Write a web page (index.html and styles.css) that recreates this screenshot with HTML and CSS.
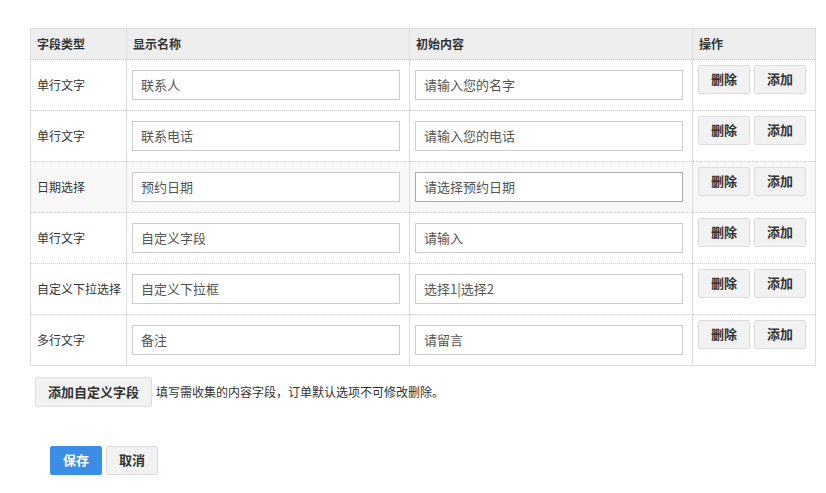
FILE: index.html
```html
<!DOCTYPE html>
<html lang="zh-CN">
<head>
  <meta charset="UTF-8">
  <meta name="viewport" content="width=device-width, initial-scale=1.0">
  <title>自定义字段</title>
  <link rel="stylesheet" href="styles.css">
</head>
<body>
  <div class="page">
    <table class="fields">
      <colgroup>
        <col class="col-type">
        <col class="col-name">
        <col class="col-value">
        <col class="col-ops">
      </colgroup>
      <thead>
        <tr>
          <th>字段类型</th>
          <th>显示名称</th>
          <th>初始内容</th>
          <th>操作</th>
        </tr>
      </thead>
      <tbody>
        <tr>
          <td>单行文字</td>
          <td><input type="text" class="field-input" value="联系人"></td>
          <td><input type="text" class="field-input" value="请输入您的名字"></td>
          <td class="ops"><button class="btn">删除</button><button class="btn">添加</button></td>
        </tr>
        <tr>
          <td>单行文字</td>
          <td><input type="text" class="field-input" value="联系电话"></td>
          <td><input type="text" class="field-input" value="请输入您的电话"></td>
          <td class="ops"><button class="btn">删除</button><button class="btn">添加</button></td>
        </tr>
        <tr class="active">
          <td>日期选择</td>
          <td><input type="text" class="field-input" value="预约日期"></td>
          <td><input type="text" class="field-input focus" value="请选择预约日期"></td>
          <td class="ops"><button class="btn">删除</button><button class="btn">添加</button></td>
        </tr>
        <tr>
          <td>单行文字</td>
          <td><input type="text" class="field-input" value="自定义字段"></td>
          <td><input type="text" class="field-input" value="请输入"></td>
          <td class="ops"><button class="btn">删除</button><button class="btn">添加</button></td>
        </tr>
        <tr>
          <td>自定义下拉选择</td>
          <td><input type="text" class="field-input" value="自定义下拉框"></td>
          <td><input type="text" class="field-input" value="选择1|选择2"></td>
          <td class="ops"><button class="btn">删除</button><button class="btn">添加</button></td>
        </tr>
        <tr>
          <td>多行文字</td>
          <td><input type="text" class="field-input" value="备注"></td>
          <td><input type="text" class="field-input" value="请留言"></td>
          <td class="ops"><button class="btn">删除</button><button class="btn">添加</button></td>
        </tr>
      </tbody>
    </table>

    <div class="add-row">
      <button class="btn btn-add">添加自定义字段</button>
      <span class="hint">填写需收集的内容字段，订单默认选项不可修改删除。</span>
    </div>

    <div class="actions">
      <button class="btn btn-primary">保存</button>
      <button class="btn">取消</button>
    </div>
  </div>
</body>
</html>
```

FILE: styles.css
```css
body {
  margin: 0;
  font-family: "Microsoft YaHei", "Noto Sans CJK SC", "Liberation Sans", sans-serif;
  font-size: 12px;
  color: #333;
  background: #fff;
}

.page {
  padding: 28px 0 0 30px;
}

/* field table */
.fields {
  width: 785px;
  border-collapse: collapse;
  table-layout: fixed;
  border: 1px solid #ddd;
}

.col-type { width: 96px; }
.col-name { width: 283px; }
.col-value { width: 283px; }
.col-ops { width: 123px; }

.fields th {
  height: 30px;
  padding: 0 6px;
  line-height: 28px;
  text-align: left;
  font-weight: bold;
  background-color: #eee;
  border-left: 1px solid #ddd;
  border-bottom: 1px dotted #ccc;
}

.fields td {
  padding: 10px 5px;
  vertical-align: middle;
  border-left: 1px solid #ddd;
  border-top: 1px dotted #ccc;
}

.fields td:first-child {
  padding-left: 6px;
  line-height: 28px;
}

.fields tr.active td {
  background-color: #f8f8f8;
}

/* operation column */
.fields td.ops {
  vertical-align: top;
  padding-top: 5px;
  padding-bottom: 0;
  white-space: nowrap;
}

.fields td.ops .btn + .btn {
  margin-left: 4px;
}

.field-input {
  display: block;
  width: 268px;
  height: 30px;
  box-sizing: border-box;
  padding: 0 8px 1px;
  border: 1px solid #ccc;
  font-family: inherit;
  font-size: 13px;
  color: #555;
  background: #fff;
  outline: none;
}

.field-input.focus {
  border-color: #aaa;
}

/* buttons */
.btn {
  width: 52px;
  height: 29px;
  padding: 0 0 2px;
  font-family: inherit;
  font-size: 13px;
  font-weight: bold;
  color: #333;
  background-color: #f2f2f2;
  border: 1px solid #ddd;
  border-radius: 2px;
  cursor: pointer;
  vertical-align: top;
}

.btn:hover {
  background-color: #e8e8e8;
}

.btn-add {
  width: 117px;
  height: 30px;
}

.btn-primary {
  color: #fff;
  background-color: #3a8ee6;
  border-color: #3a8ee6;
}

.btn-primary:hover {
  background-color: #2f80d6;
}

.add-row {
  display: flex;
  align-items: center;
  gap: 4px;
  margin-top: 11px;
  padding-left: 5px;
}

.hint {
  font-size: 12px;
  color: #333;
  padding-bottom: 2px;
}

.actions {
  display: flex;
  gap: 4px;
  margin-top: 39px;
  padding-left: 20px;
}
```
